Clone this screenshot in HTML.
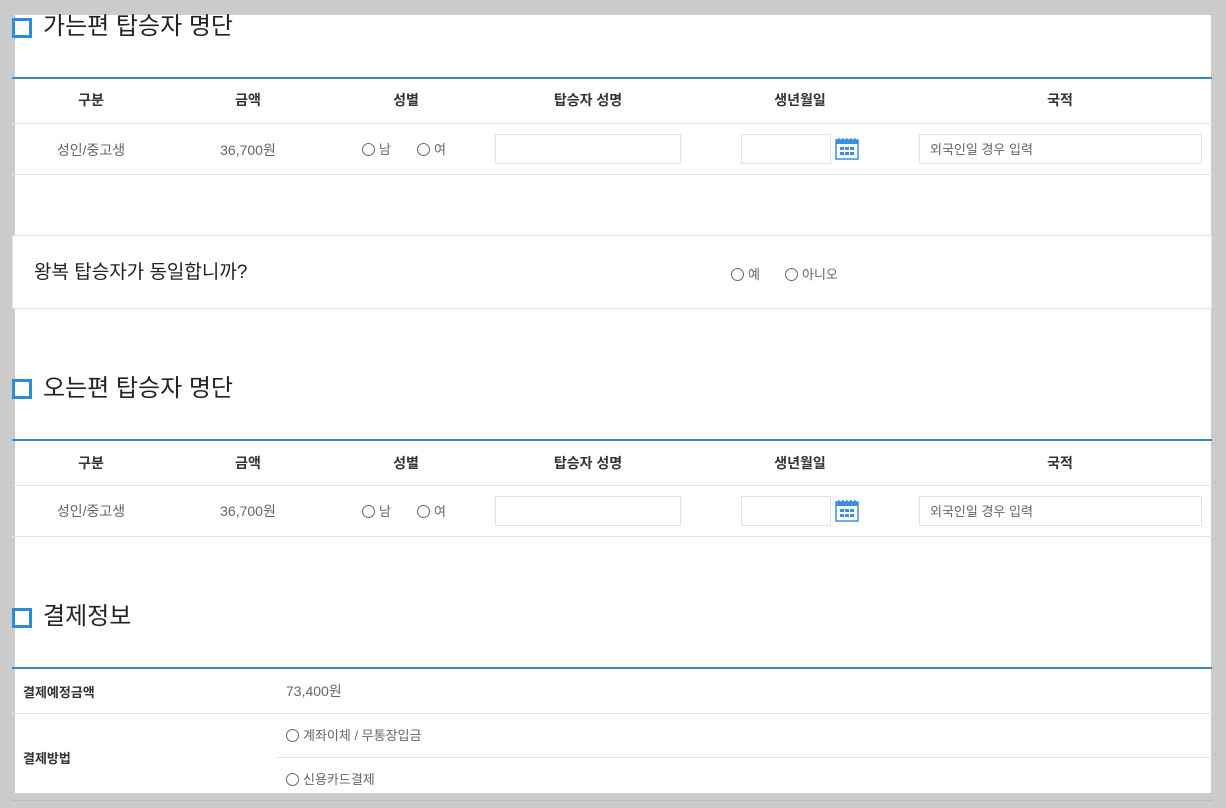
<!DOCTYPE html>
<html><head><meta charset="utf-8"><style>
*{margin:0;padding:0;box-sizing:border-box}
body{width:1226px;height:808px;background:#cbcbcb;position:relative;overflow:hidden;font-family:"Liberation Sans","Noto Sans CJK KR","NanumGothic",sans-serif;color:#555}
.a{position:absolute}
.panel{left:15px;top:15px;width:1196px;height:778px;background:#fff}
.h{font-size:24px;color:#222;left:43px;white-space:nowrap;line-height:30px}
.sq{left:12px;width:20px;height:20px;border:3px solid #2f8ad6;background:#fff}
.bl{left:12px;width:1200px;height:2px;background:#3a87c2}
.gl{left:12px;width:1200px;height:1px;background:#e6e6e6}
.c{transform:translateX(-50%);white-space:nowrap;font-size:14px;line-height:18px}
.th{color:#333;font-weight:bold}
.td{color:#666}
.inp{border:1px solid #e2e2e2;background:#fff;height:30px}
.r{display:inline-block;width:13px;height:13px;border:1px solid #666;border-radius:50%;vertical-align:-2px;margin-right:4px}
.t{white-space:nowrap;font-size:13px;color:#666;line-height:18px}
</style></head><body>
<div class="a panel"></div>

<div class="a sq" style="top:18px"></div><div class="a h" style="top:12px">가는편 탑승자 명단</div>
<div class="a bl" style="top:77px"></div>
<div class="a c th" style="left:91px;top:91px">구분</div>
<div class="a c th" style="left:248px;top:91px">금액</div>
<div class="a c th" style="left:406px;top:91px">성별</div>
<div class="a c th" style="left:588px;top:91px">탑승자 성명</div>
<div class="a c th" style="left:800px;top:91px">생년월일</div>
<div class="a c th" style="left:1060px;top:91px">국적</div>
<div class="a gl" style="top:123px"></div>
<div class="a c td" style="left:91px;top:141px">성인/중고생</div>
<div class="a c td" style="left:248px;top:141px">36,700원</div>
<div class="a t" style="left:362px;top:141px"><span class="r"></span>남</div>
<div class="a t" style="left:417px;top:141px"><span class="r"></span>여</div>
<div class="a inp" style="left:495px;top:134px;width:186px"></div>
<div class="a inp" style="left:741px;top:134px;width:90px"></div>
<svg class="a" style="left:835px;top:137px" width="24" height="23" viewBox="0 0 24 23"><rect x="1" y="3" width="22" height="19" fill="#fff" stroke="#3a8ee0" stroke-width="1.5"/><rect x="1" y="3" width="22" height="4" fill="#3a8ee0"/><g fill="#3a8ee0"><rect x="3" y="1" width="1.5" height="3"/><rect x="7" y="1" width="1.5" height="3"/><rect x="11" y="1" width="1.5" height="3"/><rect x="15" y="1" width="1.5" height="3"/><rect x="19" y="1" width="1.5" height="3"/><rect x="5" y="10" width="4" height="3"/><rect x="10" y="10" width="4" height="3"/><rect x="15" y="10" width="4" height="3"/><rect x="5" y="15" width="4" height="3"/><rect x="10" y="15" width="4" height="3"/><rect x="15" y="15" width="4" height="3"/></g></svg>
<div class="a inp" style="left:919px;top:134px;width:283px"></div>
<div class="a t" style="left:930px;top:141px">외국인일 경우 입력</div>
<div class="a gl" style="top:174px"></div>

<div class="a" style="left:12px;top:235px;width:1200px;height:74px;border:1px solid #e2e2e2;background:#fff"></div>
<div class="a" style="left:34px;top:260px;font-size:19px;color:#222;white-space:nowrap;line-height:26px">왕복 탑승자가 동일합니까?</div>
<div class="a t" style="left:731px;top:266px"><span class="r"></span>예</div>
<div class="a t" style="left:785px;top:266px"><span class="r"></span>아니오</div>

<div class="a sq" style="top:379px"></div><div class="a h" style="top:374px">오는편 탑승자 명단</div>
<div class="a bl" style="top:439px"></div>
<div class="a c th" style="left:91px;top:454px">구분</div>
<div class="a c th" style="left:248px;top:454px">금액</div>
<div class="a c th" style="left:406px;top:454px">성별</div>
<div class="a c th" style="left:588px;top:454px">탑승자 성명</div>
<div class="a c th" style="left:800px;top:454px">생년월일</div>
<div class="a c th" style="left:1060px;top:454px">국적</div>
<div class="a gl" style="top:485px"></div>
<div class="a c td" style="left:91px;top:502px">성인/중고생</div>
<div class="a c td" style="left:248px;top:502px">36,700원</div>
<div class="a t" style="left:362px;top:503px"><span class="r"></span>남</div>
<div class="a t" style="left:417px;top:503px"><span class="r"></span>여</div>
<div class="a inp" style="left:495px;top:496px;width:186px"></div>
<div class="a inp" style="left:741px;top:496px;width:90px"></div>
<svg class="a" style="left:835px;top:499px" width="24" height="23" viewBox="0 0 24 23"><rect x="1" y="3" width="22" height="19" fill="#fff" stroke="#3a8ee0" stroke-width="1.5"/><rect x="1" y="3" width="22" height="4" fill="#3a8ee0"/><g fill="#3a8ee0"><rect x="3" y="1" width="1.5" height="3"/><rect x="7" y="1" width="1.5" height="3"/><rect x="11" y="1" width="1.5" height="3"/><rect x="15" y="1" width="1.5" height="3"/><rect x="19" y="1" width="1.5" height="3"/><rect x="5" y="10" width="4" height="3"/><rect x="10" y="10" width="4" height="3"/><rect x="15" y="10" width="4" height="3"/><rect x="5" y="15" width="4" height="3"/><rect x="10" y="15" width="4" height="3"/><rect x="15" y="15" width="4" height="3"/></g></svg>
<div class="a inp" style="left:919px;top:496px;width:283px"></div>
<div class="a t" style="left:930px;top:503px">외국인일 경우 입력</div>
<div class="a gl" style="top:536px"></div>

<div class="a sq" style="top:608px"></div><div class="a h" style="top:602px">결제정보</div>
<div class="a bl" style="top:667px"></div>
<div class="a" style="left:23px;top:682px;font-size:13px;font-weight:bold;color:#333;white-space:nowrap">결제예정금액</div>
<div class="a t" style="left:286px;top:682px;font-size:14px">73,400원</div>
<div class="a gl" style="top:713px"></div>
<div class="a" style="left:23px;top:748px;font-size:13px;font-weight:bold;color:#333;white-space:nowrap">결제방법</div>
<div class="a t" style="left:286px;top:727px"><span class="r"></span>계좌이체 / 무통장입금</div>
<div class="a" style="left:276px;top:757px;width:936px;height:1px;background:#e6e6e6"></div>
<div class="a t" style="left:286px;top:771px"><span class="r"></span>신용카드결제</div>
<div class="a" style="left:12px;top:800px;width:1200px;height:1px;background:#bbb"></div>
</body></html>
